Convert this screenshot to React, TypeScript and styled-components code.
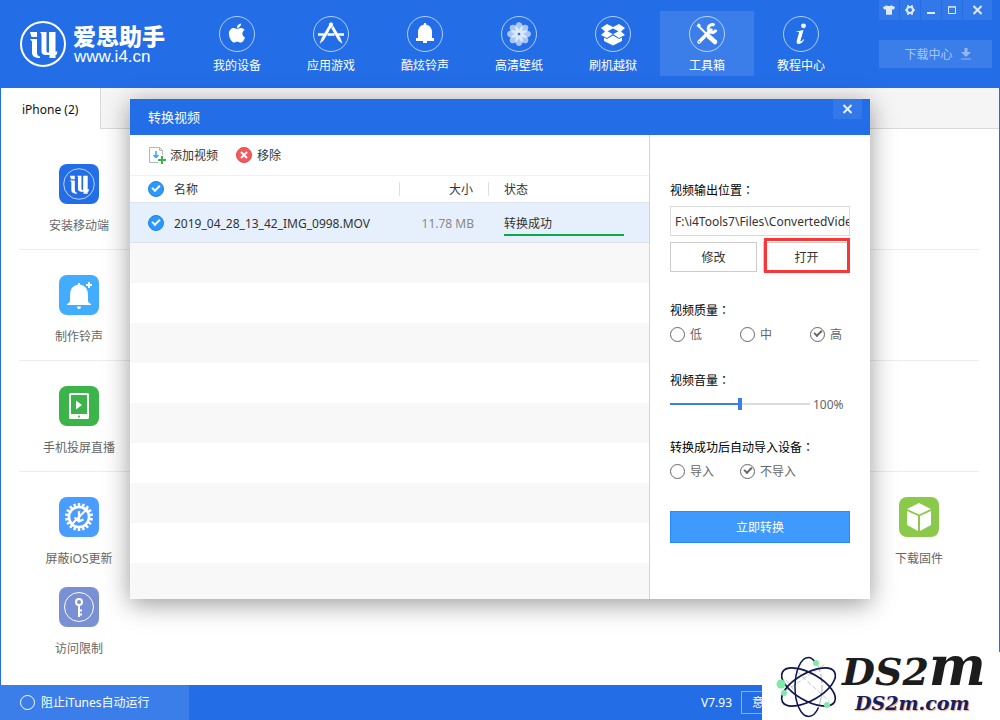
import React, { useState } from 'react';
import styled, { createGlobalStyle, css } from 'styled-components';
import { FaApple, FaTshirt } from 'react-icons/fa';

const blue = '#236ee7';

const GlobalStyle = createGlobalStyle`
  *, *::before, *::after { box-sizing: border-box; }
  body {
    margin: 0;
    font: 12px/16px "Noto Sans", "Noto Sans CJK SC", sans-serif;
    color: #333;
    background: #fff;
  }
  button, input { font: inherit; color: inherit; margin: 0; }
  button { cursor: pointer; padding: 0; border: 0; background: none; }
  svg { display: block; }
`;

const Window = styled.div`
  position: relative;
  display: flex;
  flex-direction: column;
  min-height: 100vh;
  overflow: hidden;
  background: ${blue};
`;

/* Text that stands beside an icon, a tick or a radio button. */
const Caption = styled.span`
  padding-top: 2px;
`;

/* ---------- header ---------- */

const Header = styled.header`
  display: flex;
  height: 88px;
  padding: 0 8px 0 20px;
  color: #fff;
`;

const Brand = styled.a`
  display: flex;
  align-items: center;
  gap: 7px;
  width: 170px;
  color: #fff;
  text-decoration: none;
`;

const BrandName = styled.strong`
  display: block;
  font: 900 23px/26px "Noto Sans CJK SC", sans-serif;
`;

const BrandSite = styled.span`
  display: block;
  padding-left: 1px;
  font: 17px/18px "Liberation Sans", sans-serif;
`;

const Nav = styled.nav`
  display: flex;
  flex: 1;
  padding-top: 11px;
`;

const NavItem = styled.a<{ $active?: boolean }>`
  display: flex;
  flex-direction: column;
  align-items: center;
  gap: 6px;
  width: 94px;
  height: 65px;
  padding-top: 5px;
  color: #fff;
  text-decoration: none;
  background: ${p => (p.$active ? '#3b7eea' : 'transparent')};
`;

const HeaderSide = styled.div`
  display: flex;
  flex-direction: column;
  gap: 20px;
  width: 113px;
`;

const WindowButtons = styled.div`
  display: flex;
  gap: 1px;
`;

const WindowButton = styled.button<{ $grow?: boolean }>`
  display: flex;
  align-items: center;
  justify-content: center;
  width: 20px;
  height: 20px;
  flex: ${p => (p.$grow ? '1' : 'none')};
  color: #dfeafc;
  background: #3378e8;
`;

const DownloadCenter = styled.button`
  display: flex;
  align-items: center;
  justify-content: center;
  gap: 8px;
  height: 28px;
  padding-left: 4px;
  color: #a9c7f7;
  background: #3b7eea;
`;

/* ---------- page behind the dialog ---------- */

const Body = styled.main`
  flex: 1;
  margin: 0 1px;
  background: #fff;
`;

const TabStrip = styled.div`
  display: flex;
  height: 41px;
  background: #f5f5f5;
  border-bottom: 1px solid #dadada;
`;

const Tab = styled.button`
  height: 41px;
  padding: 2px 22px 0 21px;
  color: #111;
  background: #fff;
  border-right: 1px solid #dadada;
`;

const Tools = styled.div`
  padding: 10px 20px 0 18px;
`;

const ToolRow = styled.section`
  display: grid;
  grid-template-columns: repeat(8, 1fr);
  row-gap: 20px;
  padding: 25px 0 15px;
  border-bottom: 1px solid #ececec;
  &:last-child { border-bottom: 0; }
`;

const Tool = styled.a<{ $column?: number }>`
  display: flex;
  flex-direction: column;
  align-items: center;
  gap: 14px;
  color: #666;
  text-decoration: none;
  ${p => p.$column && css`grid-column: ${p.$column};`}
`;

const ToolIcon = styled.span<{ $color: string }>`
  display: grid;
  place-items: center;
  width: 40px;
  height: 40px;
  border-radius: 8px;
  background: ${p => p.$color};
`;

/* ---------- footer ---------- */

const Footer = styled.footer`
  display: flex;
  align-items: center;
  height: 35px;
  padding-right: 238px;
  color: #fff;
`;

const BlockItunes = styled.label`
  display: flex;
  align-items: center;
  gap: 6px;
  width: 189px;
  height: 35px;
  padding-left: 20px;
  background: #3b7eea;
`;

const Version = styled.span`
  margin-left: auto;
  padding-right: 9px;
`;

const Feedback = styled.button`
  width: 21px;
  height: 23px;
  padding-left: 10px;
  white-space: nowrap;
  text-align: left;
  border: 1px solid #86b0f2;
  border-right: 0;
`;

/* ---------- dialog ---------- */

const Layer = styled.div`
  position: absolute;
  top: 99px;
  left: 0;
  right: 0;
  display: flex;
  justify-content: center;
`;

const Dialog = styled.section`
  display: flex;
  flex-direction: column;
  width: 74%;
  min-width: 740px;
  max-width: 900px;
  min-height: 500px;
  background: #fff;
  box-shadow: 0 5px 24px rgba(0, 0, 0, 0.4);
`;

const DialogHeader = styled.header`
  display: flex;
  justify-content: space-between;
  height: 36px;
  padding: 0 8px 0 18px;
  color: #fff;
  background: ${blue};
`;

const DialogTitle = styled.h2`
  margin: 0;
  font-size: 13px;
  font-weight: 400;
  line-height: 36px;
`;

const DialogClose = styled.button`
  display: grid;
  place-items: center;
  width: 29px;
  height: 20px;
  color: #e6effd;
  background: #3378e8;
`;

const DialogBody = styled.div`
  display: flex;
  flex: 1;
`;

const Files = styled.div`
  display: flex;
  flex: 1;
  flex-direction: column;
  border-right: 1px solid #d4d4d4;
`;

const Toolbar = styled.div`
  display: flex;
  align-items: center;
  gap: 18px;
  height: 41px;
  padding-left: 18px;
  border-bottom: 1px solid #f1f1f1;
`;

const ToolbarButton = styled.button<{ $gap: number }>`
  display: flex;
  align-items: center;
  gap: ${p => p.$gap}px;
`;

const FileTable = styled.table`
  width: 100%;
  table-layout: fixed;
  border-collapse: separate;
  border-spacing: 0;
  th, td {
    padding: 0;
    font-weight: 400;
    text-align: left;
    border-bottom: 1px solid #dde3eb;
  }
`;

const HeadRow = styled.tr`
  height: 27px;
`;

const FileRow = styled.tr`
  height: 40px;
  background: #e6f0fc;
`;

const CheckCell = styled.col`
  width: 44px;
`;

const NameCell = styled.col``;

const SizeCell = styled.col`
  width: 89px;
`;

const StatusCell = styled.col`
  width: 160px;
`;

const HeadLabel = styled.span<{ $end?: boolean; $divided?: boolean; $inset?: boolean }>`
  display: block;
  height: 14px;
  line-height: 16px;
  padding: ${p => (p.$inset ? '0 15px' : '0')};
  text-align: ${p => (p.$end ? 'right' : 'left')};
  border-right: ${p => (p.$divided ? '1px solid #dfdfdf' : '0')};
`;

const FileName = styled.span`
  display: block;
  padding-top: 2px;
`;

const Size = styled.span`
  display: block;
  padding: 2px 15px 0 0;
  color: #888;
  text-align: right;
`;

const Status = styled.span`
  display: block;
  width: 135px;
  padding: 6px 0 0 15px;
`;

const StatusBar = styled.span`
  display: block;
  height: 2px;
  margin-top: 2px;
  background: #0bab4c;
`;

const EmptyRows = styled.div`
  flex: 1;
  background: repeating-linear-gradient(#f8f8f8 0 40px, #fff 40px 80px);
`;

const Tick = styled.input.attrs({ type: 'checkbox' })`
  appearance: none;
  display: grid;
  place-items: center;
  width: 16px;
  height: 16px;
  margin-left: 18px;
  border: 1px solid #1b84ee;
  border-radius: 50%;
  &:checked { background: #2c97fd; }
  &:checked::after {
    content: '';
    width: 8px;
    height: 5px;
    margin-bottom: 3px;
    border: solid #fff;
    border-width: 0 0 2px 2px;
    transform: rotate(-45deg);
  }
`;

const RoundBox = styled.input`
  appearance: none;
  display: grid;
  place-items: center;
  width: 15px;
  height: 15px;
  border: 1px solid currentColor;
  border-radius: 50%;
  &:checked::after {
    content: '';
    width: 8px;
    height: 5px;
    margin-bottom: 3px;
    border: solid currentColor;
    border-width: 0 0 2px 2px;
    transform: rotate(-45deg);
  }
`;

const Settings = styled.form`
  width: 220px;
  padding: 48px 20px 20px;
`;

const Field = styled.div<{ $after?: number }>`
  display: flex;
  flex-direction: column;
  gap: 7px;
  margin-bottom: ${p => p.$after ?? 31}px;
`;

const FieldLabel = styled.label`
  color: #000;
`;

const Colon = styled.span`
  font-family: "Noto Sans CJK TC", sans-serif;
  line-height: 1;
`;

const OutputFolder = styled.div`
  display: flex;
  flex-direction: column;
  gap: 6px;
`;

const PathInput = styled.input`
  width: 100%;
  height: 30px;
  padding: 0 0 0 4px;
  border: 1px solid #dadada;
  outline: 0;
`;

const ButtonPair = styled.div`
  display: grid;
  grid-template-columns: 1fr 1fr;
  gap: 6px;
`;

const PlainButton = styled.button`
  position: relative;
  height: 30px;
  padding-top: 2px;
  border: 1px solid #ccc;
  background: #fff;
`;

const Highlight = styled.span`
  position: absolute;
  inset: -5px -1px -2px 0;
  border: 3px solid #fb3636;
`;

const Options = styled.div`
  display: grid;
  grid-template-columns: 70px 70px 1fr;
`;

const Option = styled.label`
  display: flex;
  align-items: center;
  gap: 5px;
  height: 16px;
  white-space: nowrap;
  color: #666;
`;

const VolumeRow = styled.div`
  display: flex;
  align-items: center;
  gap: 3px;
  height: 16px;
  color: #666;
`;

const Volume = styled.input`
  appearance: none;
  width: 140px;
  height: 12px;
  background: linear-gradient(90deg, #3b80ea 50%, #dcdcdc 50%) center / 100% 2px no-repeat;
  &::-webkit-slider-thumb {
    appearance: none;
    width: 4px;
    height: 12px;
    background: #3b80ea;
  }
`;

const ConvertButton = styled.button`
  width: 100%;
  height: 32px;
  padding-top: 2px;
  color: #fff;
  background: #3f9aff;
  border: 1px solid #238bfa;
`;

/* ---------- site badge in the corner ---------- */

const SiteBadge = styled.aside`
  position: absolute;
  right: 0;
  bottom: 0;
  display: flex;
  gap: 3px;
  width: 238px;
  height: 68px;
  background: #fff;
`;

const BadgeText = styled.div`
  display: flex;
  flex-direction: column;
  white-space: nowrap;
  font-family: "DejaVu Serif", serif;
  font-style: italic;
  font-weight: 700;
`;

const BadgeTitle = styled.span`
  height: 40px;
  font-size: 38px;
  line-height: 28px;
  color: #1c1c1c;
`;

const BadgeBigM = styled.span`
  font-size: 54px;
  line-height: 28px;
`;

const BadgeSite = styled.span`
  padding-left: 13px;
  font-size: 19px;
  line-height: 22px;
  color: #14205f;
  text-shadow: 1px 1px 1px #eba98e;
`;

/* ---------- drawings ---------- */

const I4Mark = ({ size, ring }: { size: number; ring: number }) => (
  <svg width={size} height={size} viewBox="0 0 46 46" fill="none" stroke="#fff" aria-hidden="true">
    <circle cx="23" cy="23" r="22" strokeWidth={ring} />
    <path d="M10 11h7v5h-5.500z" fill="#fff" stroke="none" />
    <path d="M10 18h7v14q0 3 3 3.500v1.500q-8 0-8-5V20.500z" fill="#fff" stroke="none" />
    <path d="M20 11h6.500v19q0 1.500 1.500 1.500h1V11h6.500v19.500h2l-1 3.500h-1v3h-6v-3h-4q-4 0-4-4V13z" fill="#fff" stroke="none" />
  </svg>
);

const Ring = ({ children }: { children: React.ReactNode }) => (
  <svg width="36" height="36" viewBox="0 0 36 36" fill="#fff" aria-hidden="true">
    <circle cx="18" cy="18" r="17.500" fill="none" stroke="#fff" strokeOpacity="0.65" />
    {children}
  </svg>
);

const petals = [0, 45, 90, 135, 180, 225, 270, 315];
const teeth = Array.from({ length: 18 }, (_, i) => i * 20);

const navItems = [
  { label: '我的设备', icon: <FaApple x={7} y={6} size={22} /> },
  {
    label: '应用游戏',
    icon: (
      <g stroke="#fff" fill="none">
        <path d="M19 7l-9.500 16.500" strokeWidth="3" />
        <path d="M17 7l9.500 16.500" strokeWidth="3" />
        <path d="M5 18.500h6M14.500 18.500h7M25 18.500h6" strokeWidth="2.500" />
        <path d="M8.500 23l2 1.200-3.500 3zM27.500 23l-2 1.200 3.500 3z" fill="#fff" strokeWidth="0.500" />
        <path d="M20.500 9.500l-4 5" stroke={blue} strokeWidth="0.600" />
      </g>
    ),
  },
  {
    label: '酷炫铃声',
    icon: <path d="M17 8.500V7h2v1.500q6 1.500 6 8V22h2v3h-7v2h-4v-2H9v-3h2v-5.500q0-6.500 6-8z" />,
  },
  {
    label: '高清壁纸',
    icon: (
      <g>
        {petals.map(a => (
          <ellipse key={a} cx="18" cy="11.500" rx="3.800" ry="5.500" fillOpacity="0.600" transform={`rotate(${a} 18 18)`} />
        ))}
        <circle cx="18" cy="18" r="1.300" fill={blue} fillOpacity="0.500" />
      </g>
    ),
  },
  {
    label: '刷机越狱',
    icon: (
      <g>
        <path d="M12 8l6 3 6-3 6 4-4 3.500 4 3.500-6 3-6-4-6 4-6-3 4-3.500L6 12z" />
        <path d="M18 12.500l5.500 2.800-5.500 2.900-5.500-2.900z" fill={blue} />
        <path d="M9 21.500l3 1.500 6-3.500 6 3.500 3-1.500V25l-9 4.500L9 25z" />
      </g>
    ),
  },
  {
    label: '工具箱',
    active: true,
    icon: (
      <g fill="none" stroke="#fff">
        <path d="M9 9.500l10.500 10.500" strokeWidth="2" />
        <path d="M8.500 8.500l2.500 2" strokeWidth="3" />
        <path d="M20 20.500l6 5.500" strokeWidth="4.500" strokeLinecap="round" />
        <path d="M10 26l12-12" strokeWidth="3.500" strokeLinecap="round" />
        <path d="M25.500 9.300a4 4 0 1 0 1.500 4.500" strokeWidth="3" />
        <circle cx="10.300" cy="25.700" r="0.800" fill="#3b7eea" stroke="none" />
      </g>
    ),
  },
  {
    label: '教程中心',
    icon: (
      <g>
        <circle cx="20.500" cy="9.800" r="2.400" />
        <path d="M13.500 15.500q3.500-1 7-1.500l-3 10.500q-.3 1.300.6.900 1-.5 2.200-2.200l.9.600q-2.400 4-5.200 4.200-3 0-2.300-3l2.300-8q.2-.9-.7-.9h-1.900z" />
      </g>
    ),
  },
];

const RingBellIcon = () => (
  <svg width="40" height="40" viewBox="0 0 40 40" fill="#fff" aria-hidden="true">
    <path d="M19 9.500V8h2v1.500q8 1.500 8 10.500v6q0 2 3 3v1H8v-1q3-1 3-3v-6q0-9 8-10.500zM18 31.500h4q0 2.500-2 2.500t-2-2.500z" />
    <path d="M29 7h2v2h2v2h-2v2h-2v-2h-2V9h2z" />
  </svg>
);

const CastIcon = () => (
  <svg width="40" height="40" viewBox="0 0 40 40" aria-hidden="true">
    <rect x="10" y="7" width="20" height="26" rx="1.500" fill="#fff" />
    <rect x="12" y="9" width="16" height="19" fill="#3bb44a" />
    <path d="M17 14.500l6 4.500-6 4.500z" fill="#fff" />
    <circle cx="20" cy="30.500" r="1" fill="#3bb44a" />
  </svg>
);

const UpdateIcon = () => (
  <svg width="40" height="40" viewBox="0 0 40 40" fill="none" stroke="#fff" aria-hidden="true">
    <circle cx="20" cy="20" r="10" strokeWidth="2.500" />
    {teeth.map(a => (
      <path key={a} d="M20 6v4" strokeWidth="2.500" transform={`rotate(${a} 20 20)`} />
    ))}
    <path d="M20 14v9M15.500 20.500l4.500 4 4.500-2" strokeWidth="2.300" />
    <path d="M29 11L12 28" strokeWidth="2" />
  </svg>
);

const KeyIcon = () => (
  <svg width="40" height="40" viewBox="0 0 40 40" fill="none" stroke="#fff" aria-hidden="true">
    <circle cx="20" cy="20" r="14.500" />
    <circle cx="20" cy="15" r="3" strokeWidth="2" />
    <path d="M20 18v12M20 23.500h3M20 27.500h3" strokeWidth="2" />
  </svg>
);

const CubeIcon = () => (
  <svg width="40" height="40" viewBox="0 0 40 40" fill="#fff" aria-hidden="true">
    <path d="M20 6l12 6-12 5.500L8 12zM8 14l11 5v15L8 28zM32 14l-11 5v15l11-6z" />
  </svg>
);

const CloseGlyph = () => (
  <svg width="11" height="10" viewBox="0 0 11 10" stroke="currentColor" strokeWidth="2" aria-hidden="true">
    <path d="M1.500 1l8 8M9.500 1l-8 8" />
  </svg>
);

const AddFileIcon = () => (
  <svg width="18" height="18" viewBox="0 0 18 18" fill="none" aria-hidden="true">
    <path d="M14.500 9V4.500l-3-3H1.500v15H10M11.500 1.500v3h3" stroke="#b5b5b5" />
    <path d="M8 5v6M5.500 9L8 11.500 10.500 9" stroke="#3e9bfb" strokeWidth="1.500" />
    <path d="M14 10v8M10 14h8" stroke="#3bb44a" strokeWidth="2" />
  </svg>
);

const RemoveIcon = () => (
  <svg width="16" height="16" viewBox="0 0 16 16" fill="none" aria-hidden="true">
    <circle cx="8" cy="8" r="7.500" fill="#f6595d" stroke="#e2484d" />
    <path d="M5 5l6 6M11 5l-6 6" stroke="#fff" strokeWidth="2" />
  </svg>
);

const AtomIcon = () => (
  <svg width="77" height="68" viewBox="0 0 77 68" fill="none" stroke="#12164f" aria-hidden="true">
    <path d="M62 13L22 40M30 15l37 34M24 28l8 10" stroke="#c4c7d2" strokeDasharray="5 2" />
    <path d="M46.500 5.500c7.500 0 13.500 13 13.500 29.500s-6 29.500-13.500 29.500" stroke="#b0b4c8" strokeDasharray="9 2" />
    <path d="M54 11Q50 5.500 46.500 5.500C39 5.500 33 18.500 33 35s6 29.500 13.500 29.500q6 0 10-9" strokeWidth="1.500" />
    <ellipse cx="46.500" cy="35" rx="13.500" ry="30" strokeWidth="1.700" transform="rotate(60 46.500 35)" />
    <ellipse cx="46.500" cy="35" rx="13.500" ry="30" strokeWidth="1.700" transform="rotate(-60 46.500 35)" />
    <g fill="#7eeaa6" stroke="none">
      <circle cx="54" cy="11" r="3" />
      <circle cx="19" cy="32" r="4.500" />
      <circle cx="22" cy="41" r="3" />
      <circle cx="65" cy="53" r="3" />
    </g>
  </svg>
);

const ToolLink = ({ label, color, column, children }: {
  label: string; color: string; column?: number; children: React.ReactNode;
}) => (
  <Tool href="#" $column={column}>
    <ToolIcon $color={color}>{children}</ToolIcon>
    {label}
  </Tool>
);

const RadioField = ({ id, label, options, value, after, onChange }: {
  id: string; label: string; options: string[]; value: string; after?: number; onChange: (v: string) => void;
}) => (
  <Field role="radiogroup" aria-labelledby={id} $after={after}>
    <FieldLabel as="span" id={id}>{label}<Colon>：</Colon></FieldLabel>
    <Options>
      {options.map(o => (
        <Option key={o}>
          <RoundBox type="radio" name={id} checked={value === o} onChange={() => onChange(o)} />
          <Caption>{o}</Caption>
        </Option>
      ))}
    </Options>
  </Field>
);

export default function App() {
  const [quality, setQuality] = useState('高');
  const [autoImport, setAutoImport] = useState('不导入');

  return (
    <Window>
      <GlobalStyle />
      <Header>
        <Brand href="#">
          <I4Mark size={46} ring={2} />
          <span>
            <BrandName>爱思助手</BrandName>
            <BrandSite>www.i4.cn</BrandSite>
          </span>
        </Brand>
        <Nav>
          {navItems.map(n => (
            <NavItem key={n.label} href="#" $active={n.active}>
              <Ring>{n.icon}</Ring>
              {n.label}
            </NavItem>
          ))}
        </Nav>
        <HeaderSide>
          <WindowButtons>
            <WindowButton aria-label="皮肤"><FaTshirt size={12} /></WindowButton>
            <WindowButton aria-label="设置">
              <svg width="10" height="10" viewBox="0 0 10 10" fill="none" stroke="currentColor">
                <circle cx="5" cy="5" r="3" strokeWidth="2" />
                <path d="M3 0v2M7 0v2M3 8v2M7 8v2M0 5h2M8 5h2" strokeWidth="1.500" />
              </svg>
            </WindowButton>
            <WindowButton aria-label="最小化">
              <svg width="8" height="8" viewBox="0 0 8 8" fill="currentColor"><path d="M0 6h8v2H0z" /></svg>
            </WindowButton>
            <WindowButton aria-label="最大化">
              <svg width="8" height="8" viewBox="0 0 8 8" fill="none" stroke="currentColor">
                <path d="M.5 1h7v6.500h-7zM0 .8h8" />
              </svg>
            </WindowButton>
            <WindowButton aria-label="关闭" $grow><CloseGlyph /></WindowButton>
          </WindowButtons>
          <DownloadCenter>
            <Caption>下载中心</Caption>
            <svg width="10" height="12" viewBox="0 0 10 12" fill="currentColor" opacity="0.8" aria-hidden="true">
              <path d="M3.500 0h3v4H10L5 9 0 4h3.500zM0 10.500h10v1H0z" />
            </svg>
          </DownloadCenter>
        </HeaderSide>
      </Header>

      <Body>
        <TabStrip><Tab>iPhone (2)</Tab></TabStrip>
        <Tools>
          <ToolRow>
            <ToolLink label="安装移动端" color="#236ee7"><I4Mark size={32} ring={1} /></ToolLink>
          </ToolRow>
          <ToolRow>
            <ToolLink label="制作铃声" color="#42adff"><RingBellIcon /></ToolLink>
          </ToolRow>
          <ToolRow>
            <ToolLink label="手机投屏直播" color="#3bb44a"><CastIcon /></ToolLink>
          </ToolRow>
          <ToolRow>
            <ToolLink label="屏蔽iOS更新" color="#4a9cff"><UpdateIcon /></ToolLink>
            <ToolLink label="下载固件" color="#8bc94a" column={8}><CubeIcon /></ToolLink>
            <ToolLink label="访问限制" color="#7991d4"><KeyIcon /></ToolLink>
          </ToolRow>
        </Tools>
      </Body>

      <Footer>
        <BlockItunes>
          <RoundBox type="checkbox" />
          阻止iTunes自动运行
        </BlockItunes>
        <Version>V7.93</Version>
        <Feedback>意</Feedback>
      </Footer>

      <Layer>
        <Dialog role="dialog" aria-labelledby="dialog-title">
          <DialogHeader>
            <DialogTitle id="dialog-title">转换视频</DialogTitle>
            <DialogClose aria-label="关闭"><CloseGlyph /></DialogClose>
          </DialogHeader>
          <DialogBody>
            <Files>
              <Toolbar>
                <ToolbarButton $gap={4}><AddFileIcon /><Caption>添加视频</Caption></ToolbarButton>
                <ToolbarButton $gap={5}><RemoveIcon /><Caption>移除</Caption></ToolbarButton>
              </Toolbar>
              <FileTable>
                <colgroup>
                  <CheckCell /><NameCell /><SizeCell /><StatusCell />
                </colgroup>
                <thead>
                  <HeadRow>
                    <th><Tick defaultChecked aria-label="全选" /></th>
                    <th><HeadLabel $divided>名称</HeadLabel></th>
                    <th><HeadLabel $divided $inset $end>大小</HeadLabel></th>
                    <th><HeadLabel $inset>状态</HeadLabel></th>
                  </HeadRow>
                </thead>
                <tbody>
                  <FileRow>
                    <td><Tick defaultChecked aria-label="选择文件" /></td>
                    <td><FileName>2019_04_28_13_42_IMG_0998.MOV</FileName></td>
                    <td><Size>11.78 MB</Size></td>
                    <td><Status>转换成功<StatusBar /></Status></td>
                  </FileRow>
                </tbody>
              </FileTable>
              <EmptyRows />
            </Files>

            <Settings onSubmit={e => e.preventDefault()}>
              <Field>
                <FieldLabel htmlFor="output">视频输出位置<Colon>：</Colon></FieldLabel>
                <OutputFolder>
                  <PathInput id="output" readOnly value="F:\i4Tools7\Files\ConvertedVideo" />
                  <ButtonPair>
                    <PlainButton type="button">修改</PlainButton>
                    <PlainButton type="button">打开<Highlight /></PlainButton>
                  </ButtonPair>
                </OutputFolder>
              </Field>
              <RadioField id="quality" label="视频质量" options={['低', '中', '高']} value={quality} onChange={setQuality} />
              <Field $after={28}>
                <FieldLabel htmlFor="volume">视频音量<Colon>：</Colon></FieldLabel>
                <VolumeRow>
                  <Volume id="volume" type="range" min="0" max="200" defaultValue="100" />
                  <Caption>100%</Caption>
                </VolumeRow>
              </Field>
              <RadioField id="auto-import" label="转换成功后自动导入设备" options={['导入', '不导入']} value={autoImport} after={32} onChange={setAutoImport} />
              <ConvertButton type="submit">立即转换</ConvertButton>
            </Settings>
          </DialogBody>
        </Dialog>
      </Layer>

      <SiteBadge>
        <AtomIcon />
        <BadgeText>
          <BadgeTitle>DS2<BadgeBigM>m</BadgeBigM></BadgeTitle>
          <BadgeSite>DS2m.com</BadgeSite>
        </BadgeText>
      </SiteBadge>
    </Window>
  );
}
